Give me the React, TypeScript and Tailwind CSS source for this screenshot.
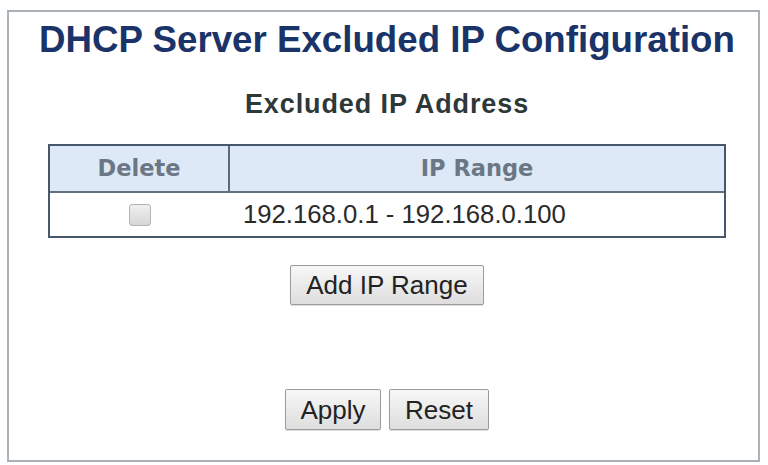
import React from "react";

const ranges = ["192.168.0.1 - 192.168.0.100"];

const Button = ({ label, width }: { label: string; width: string }) => (
  <button
    className={`${width} h-[41px] border border-[#9c9c9c] rounded-[2px] bg-linear-to-b from-[#f7f7f7] to-[#dedede] text-[26px] leading-none text-[#222] shadow-[0_1px_1px_rgba(0,0,0,0.15)]`}
  >
    {label}
  </button>
);

export default function App() {
  return (
    <div
      className="w-[768px] h-[465px] bg-white pt-[10px] pl-[7px] pr-[8px]"
      style={{ fontFamily: '"Liberation Sans", Arial, sans-serif' }}
    >
      <div className="h-[452px] border-2 border-[#aab2b8] flex flex-col items-center pl-[7px]">
        <h1 className="mt-[7px] text-[36.7px] leading-[42px] font-bold text-[#1a3369]">
          DHCP Server Excluded IP Configuration
        </h1>
        <h2 className="mt-[27px] text-[27px] leading-[32px] font-bold tracking-[0.9px] text-[#2f3838]">
          Excluded IP Address
        </h2>

        {/* Excluded ranges table */}
        <div className="mt-[24px] w-[678px] border-2 border-[#46586a]">
          <div
            className="flex h-[47px] bg-[#dde9f6] border-b-2 border-[#64707d] text-[22.5px] font-bold text-[#6b7785]"
            style={{ fontFamily: '"DejaVu Sans", Verdana, sans-serif' }}
          >
            <div className="w-[180px] border-r-2 border-[#5d6a77] flex items-center justify-center">
              Delete
            </div>
            <div className="flex-1 flex items-center justify-center">IP Range</div>
          </div>
          {ranges.map((r) => (
            <div key={r} className="flex h-[43px] items-center bg-white">
              <div className="w-[180px] flex items-center justify-center">
                <div className="w-[22px] h-[22px] rounded-[3px] border border-[#b3b3b3] bg-linear-to-b from-[#f0f0f0] to-[#d6d6d6]" />
              </div>
              <div className="pl-[13px] text-[25.7px] leading-none text-[#2a2a2a]">{r}</div>
            </div>
          ))}
        </div>

        <div className="mt-[27px]">
          <button className="w-[194px] h-[40px] border border-[#9c9c9c] rounded-[2px] bg-linear-to-b from-[#f7f7f7] to-[#dedede] text-[26px] leading-none text-[#222] shadow-[0_1px_1px_rgba(0,0,0,0.15)]">
            Add IP Range
          </button>
        </div>

        <div className="mt-[84px] flex gap-[8px]">
          <Button label="Apply" width="w-[96px]" />
          <Button label="Reset" width="w-[100px]" />
        </div>
      </div>
    </div>
  );
}
